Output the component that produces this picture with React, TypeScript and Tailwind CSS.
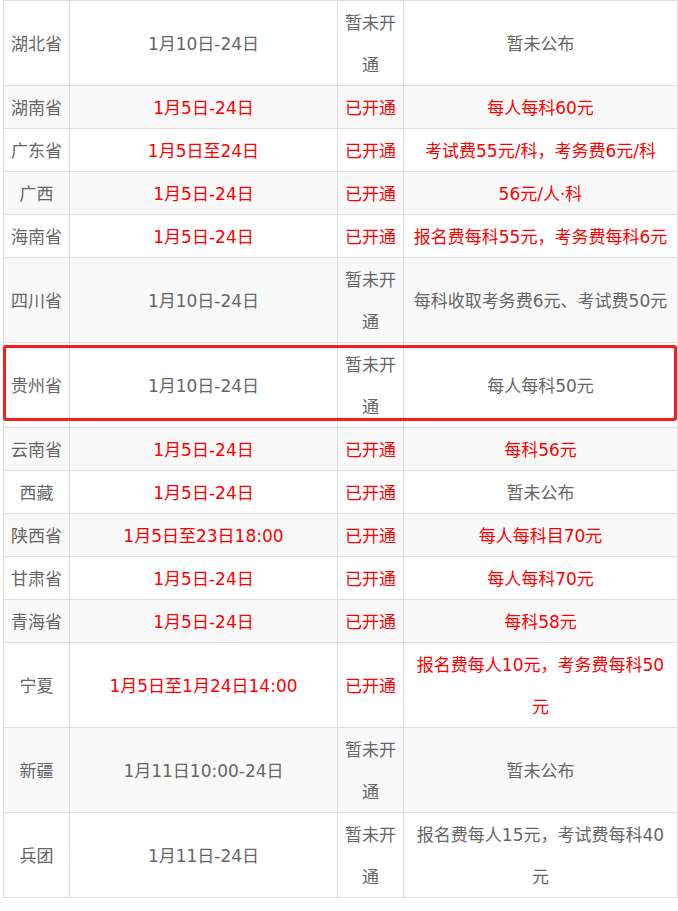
const GRAY = "text-[#666666]";
const RED = "text-[#ff0000]";

type Row = {
  name: string;
  date: string;
  dateRed?: boolean;
  open: boolean;
  fee: string[];
  feeRed?: boolean;
};

const rows: Row[] = [
  { name: "湖北省", date: "1月10日-24日", open: false, fee: ["暂未公布"] },
  { name: "湖南省", date: "1月5日-24日", dateRed: true, open: true, fee: ["每人每科60元"], feeRed: true },
  { name: "广东省", date: "1月5日至24日", dateRed: true, open: true, fee: ["考试费55元/科，考务费6元/科"], feeRed: true },
  { name: "广西", date: "1月5日-24日", dateRed: true, open: true, fee: ["56元/人·科"], feeRed: true },
  { name: "海南省", date: "1月5日-24日", dateRed: true, open: true, fee: ["报名费每科55元，考务费每科6元"], feeRed: true },
  { name: "四川省", date: "1月10日-24日", open: false, fee: ["每科收取考务费6元、考试费50元"] },
  { name: "贵州省", date: "1月10日-24日", open: false, fee: ["每人每科50元"] },
  { name: "云南省", date: "1月5日-24日", dateRed: true, open: true, fee: ["每科56元"], feeRed: true },
  { name: "西藏", date: "1月5日-24日", dateRed: true, open: true, fee: ["暂未公布"] },
  { name: "陕西省", date: "1月5日至23日18:00", dateRed: true, open: true, fee: ["每人每科目70元"], feeRed: true },
  { name: "甘肃省", date: "1月5日-24日", dateRed: true, open: true, fee: ["每人每科70元"], feeRed: true },
  { name: "青海省", date: "1月5日-24日", dateRed: true, open: true, fee: ["每科58元"], feeRed: true },
  { name: "宁夏", date: "1月5日至1月24日14:00", dateRed: true, open: true, fee: ["报名费每人10元，考务费每科50", "元"], feeRed: true },
  { name: "新疆", date: "1月11日10:00-24日", open: false, fee: ["暂未公布"] },
  { name: "兵团", date: "1月11日-24日", open: false, fee: ["报名费每人15元，考试费每科40", "元"] },
];

function Cell({ lines, red, first, bg }: { lines: string[]; red?: boolean; first?: boolean; bg: string }) {
  return (
    <div
      className={`flex flex-col items-center justify-center px-[4px] text-center whitespace-nowrap border-r border-b border-[#dddddd] ${
        first ? "border-l" : ""
      } ${red ? RED : GRAY} ${bg}`}
    >
      {lines.map((l, i) => (
        <span key={i} className="block relative top-[1px] leading-[42px]">
          {l}
        </span>
      ))}
    </div>
  );
}

export default function App() {
  return (
    <div
      className="relative w-[678px] h-[911px] overflow-hidden bg-white text-[17px]"
      style={{ fontFamily: '"DejaVu Sans", "Noto Sans CJK SC", sans-serif' }}
    >
      <div className="ml-[3px] w-[675px] grid grid-cols-[67px_268px_66px_274px] border-t border-[#dddddd]">
        {rows.map((row, i) => {
          const bg = i % 2 === 1 ? "bg-[#f9f9f9]" : "bg-white";
          return (
            <div key={row.name} className="contents">
              <Cell lines={[row.name]} first bg={bg} />
              <Cell lines={[row.date]} red={row.dateRed} bg={bg} />
              <Cell lines={row.open ? ["已开通"] : ["暂未开", "通"]} red={row.open} bg={bg} />
              <Cell lines={row.fee} red={row.feeRed} bg={bg} />
            </div>
          );
        })}
      </div>

      {/* highlight around 贵州省 */}
      <div className="absolute left-[3px] top-[345px] w-[674px] h-[76px] border-[3px] border-[#ff1a1a] rounded-[3px]" />
    </div>
  );
}
